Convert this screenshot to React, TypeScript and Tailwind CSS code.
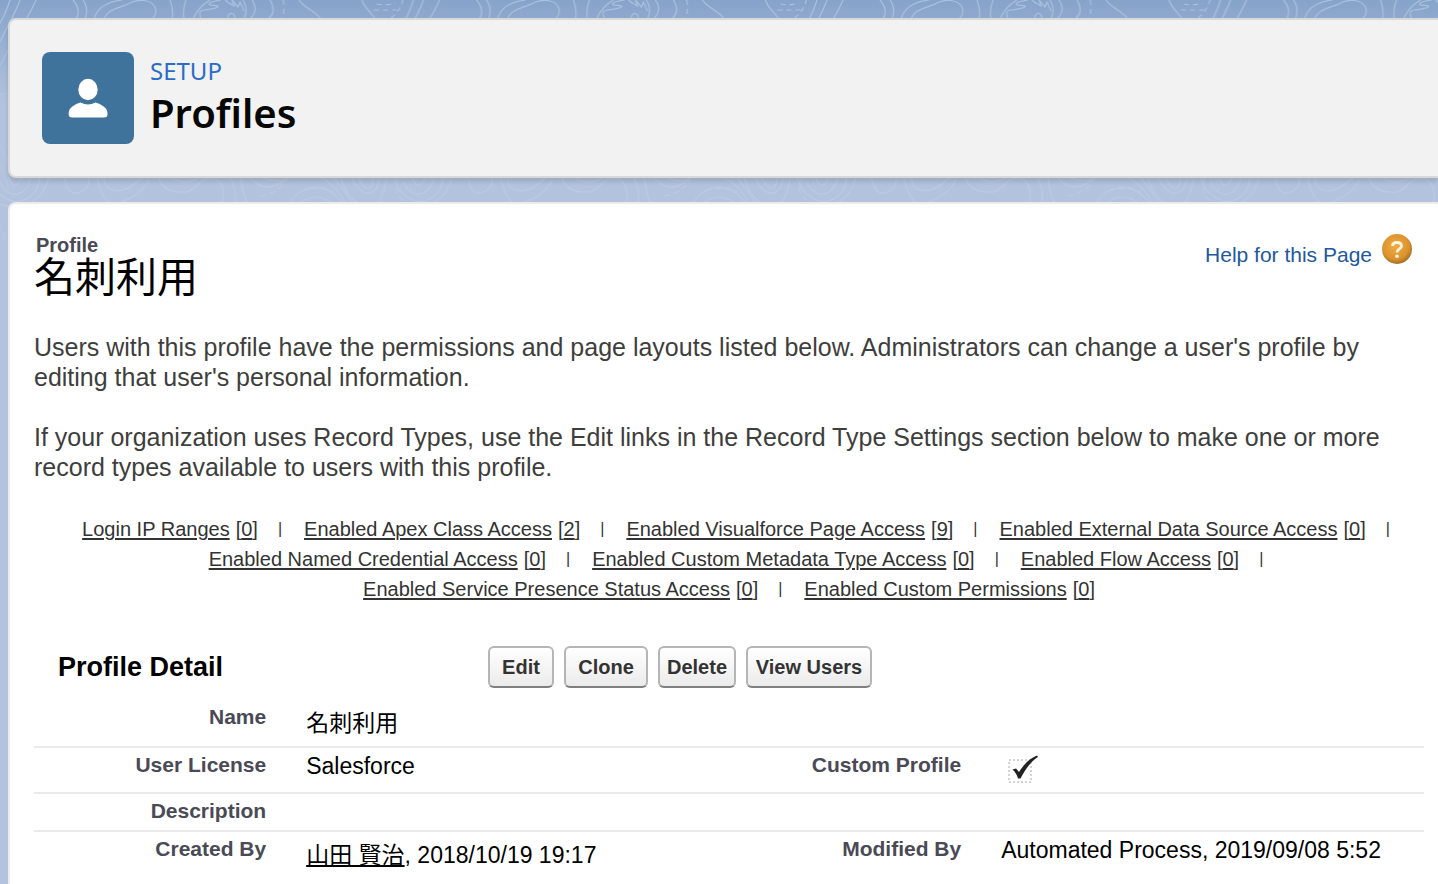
const sans = "font-['Liberation_Sans','Noto_Sans_CJK_JP',sans-serif]"

const relatedLinks = [
    { label: 'Login IP Ranges', count: 0 },
    { label: 'Enabled Apex Class Access', count: 2 },
    { label: 'Enabled Visualforce Page Access', count: 9 },
    { label: 'Enabled External Data Source Access', count: 0 },
    { label: 'Enabled Named Credential Access', count: 0 },
    { label: 'Enabled Custom Metadata Type Access', count: 0 },
    { label: 'Enabled Flow Access', count: 0 },
    { label: 'Enabled Service Presence Status Access', count: 0 },
    { label: 'Enabled Custom Permissions', count: 0 },
]

const actions = [
    { label: 'Edit', width: 'w-[66px]' },
    { label: 'Clone', width: 'w-[84px]' },
    { label: 'Delete', width: 'w-[78px]' },
    { label: 'View Users', width: 'w-[126px]' },
]

const labelClass = 'pt-1 pr-[18px] text-right align-top text-[21px] leading-[26px] font-bold text-[#4a4a56]'
const valueClass = 'pl-[22px] text-left align-top text-[23px] leading-[28px] text-black'

export default function App() {
    return (
        <div className={`relative min-h-screen overflow-hidden bg-[#b3c3de] pt-[18px] pl-2 ${sans}`}>
            <Backdrop />
            <SetupHeader />
            <main className="relative mt-6 min-h-[682px] rounded-tl-lg border-t-2 border-l-2 border-[#ebebeb] bg-white pt-7 pr-[14px] pl-6">
                <ProfileTitle />
                <div className="mt-[34px] pr-5 text-[25px] leading-[30px] text-[#3e3e3c]">
                    <p>
                        Users with this profile have the permissions and page layouts listed below. Administrators can change a user's profile by editing that user's personal information.
                    </p>
                    <p className="mt-[30px]">
                        If your organization uses Record Types, use the Edit links in the Record Type Settings section below to make one or more record types available to users with this profile.
                    </p>
                </div>
                <RelatedLinks />
                <ProfileDetail />
            </main>
        </div>
    )
}

const SetupHeader = () => (
    <header className="relative flex h-40 items-start gap-4 rounded-l-lg border-2 border-r-0 border-[#d8d8d8] bg-[#f2f2f2] p-8 shadow-[0_4px_4px_rgba(0,0,0,0.12)]">
        <div className="size-[92px] shrink-0 rounded-lg bg-[#40739b]">
            <svg viewBox="0 0 92 92" className="size-full" fill="#fff" aria-hidden="true">
                <ellipse cx="46" cy="37.5" rx="9.7" ry="10.7" />
                <path d="M38.5 50.500C32 52.500 26.700 56 26.700 61V62.500Q26.700 65.500 30 65.500H62.200Q65.500 65.500 65.500 62.500V61C65.500 56 60 52.500 53.500 50.500Q46 54.500 38.500 50.500Z" />
            </svg>
        </div>
        <div className="font-['Noto_Sans',sans-serif]">
            <p className="mt-1 text-[24px] leading-[30px] text-[#2a6cc8]">SETUP</p>
            <h1 className="text-[40px] leading-[54px] font-semibold text-[#080707]">Profiles</h1>
        </div>
    </header>
)

const ProfileTitle = () => (
    <div className="flex items-start justify-between">
        <div>
            <p className="pl-[2px] text-[20px] leading-[26px] font-bold text-[#4a4a56]">Profile</p>
            <h2 className="text-[41px] leading-[40px] text-black">名刺利用</h2>
        </div>
        <a href="#help" className="flex gap-[10px] pr-3 text-[21px] leading-[46px] text-[#2258a0]">
            Help for this Page
            <HelpIcon />
        </a>
    </div>
)

const RelatedLinks = () => (
    <ul className="mt-8 flex flex-wrap justify-center text-[20px] leading-[30px] text-[#333]">
        {relatedLinks.map(({ label, count }, i) => (
            <li key={label} className="flex items-center pl-[18px] last:pr-[18px]">
                <a href="#related" className="underline decoration-2 underline-offset-2">{label}</a>
                <span className="pl-[6px]">[<span className="underline decoration-2 underline-offset-2">{count}</span>]</span>
                {i < relatedLinks.length - 1 && <span className="pr-1 pl-5 text-[16px]">|</span>}
            </li>
        ))}
    </ul>
)

const ProfileDetail = () => (
    <section className="mt-10">
        <div className="flex h-[46px] items-start">
            <h3 className="w-[454px] pl-6 text-[27px] leading-[46px] font-bold text-black">Profile Detail</h3>
            <div className="flex gap-[10px] pt-[2px]">
                {actions.map(({ label, width }) => (
                    <button
                        key={label}
                        type="button"
                        className={`h-[42px] rounded-md border-2 border-[#b5b5b5] border-b-[#7f7f7f] bg-linear-to-b from-white to-[#ebebeb] text-[20px] font-bold whitespace-nowrap text-[#333] ${width}`}
                    >
                        {label}
                    </button>
                ))}
            </div>
        </div>
        <table className="mt-[10px] w-full table-fixed border-collapse">
            <colgroup>
                <col className="w-[18%]" />
                <col className="w-[32%]" />
                <col className="w-[18%]" />
                <col className="w-[32%]" />
            </colgroup>
            <tbody>
                <tr className="h-[47px] border-b-2 border-[#ebebeb]">
                    <th scope="row" className={labelClass}>Name</th>
                    <td colSpan={3} className={`pt-[9px] ${valueClass}`}>名刺利用</td>
                </tr>
                <tr className="h-[46px] border-b-2 border-[#ebebeb]">
                    <th scope="row" className={labelClass}>User License</th>
                    <td className={`pt-1 ${valueClass}`}>Salesforce</td>
                    <th scope="row" className={labelClass}>Custom Profile</th>
                    <td className="pt-[7px] pl-[29px] align-top"><CheckedMark /></td>
                </tr>
                <tr className="h-[38px] border-b-2 border-[#ebebeb]">
                    <th scope="row" className={labelClass}>Description</th>
                    <td colSpan={3} />
                </tr>
                <tr>
                    <th scope="row" className={labelClass}>Created By</th>
                    <td className={`pt-[9px] ${valueClass}`}>
                        <a href="#user" className="underline decoration-2 underline-offset-2">山田 賢治</a>, 2018/10/19 19:17
                    </td>
                    <th scope="row" className={labelClass}>Modified By</th>
                    <td className={`pt-1 ${valueClass}`}>Automated Process, 2019/09/08 5:52</td>
                </tr>
            </tbody>
        </table>
    </section>
)

const HelpIcon = () => (
    <svg viewBox="0 0 30 30" className="mt-[2px] size-[30px]" aria-hidden="true">
        <defs>
            <radialGradient id="help" cx="0.45" cy="0.4" r="0.62">
                <stop offset="0" stopColor="#f0ac42" />
                <stop offset="0.7" stopColor="#dc942e" />
                <stop offset="1" stopColor="#a06a25" />
            </radialGradient>
        </defs>
        <circle cx="15" cy="15" r="15" fill="url(#help)" />
        <path d="M10.500 12C10.500 9 12.500 8.500 15 8.500S19.500 9.500 19.500 12C19.500 15 15 14.800 15 18.500" fill="none" stroke="#fff3df" strokeWidth="2.800" />
        <circle cx="15" cy="22.300" r="1.800" fill="#fff3df" />
    </svg>
)

const CheckedMark = () => (
    <svg viewBox="0 0 30 30" className="size-[30px]" role="img" aria-label="Checked">
        <rect x="1" y="5" width="22" height="22" fill="none" stroke="#d4d4d4" strokeWidth="2" strokeDasharray="2 2" />
        <path d="M4.500 14.500L8 13.500L11 17C15 11 20 4 29 0.500L30 2C22 7 17 15 12.500 23.500H10C9 20 7.500 17 4.500 14.500Z" fill="#222" />
    </svg>
)

// topographic lines repeated across the sky gradient
const Backdrop = () => (
    <div className="absolute inset-x-0 top-0 h-[300px] bg-linear-to-b from-[#86a3ca] to-[#b3c3de] to-35%" aria-hidden="true">
        <svg className="size-full" fill="none" strokeWidth="1.200">
            <defs>
                <pattern id="contour" width="403.500" height="300" patternUnits="userSpaceOnUse">
                    <g stroke="#a9c1dd">
                        <path d="M10 0C7 10 3 18 -2 27M20 0C15 14 8 24 0 42M36 0C29 18 14 36 0 66M73 0C80 8 79 14 76 19M83 0C88 7 87 14 85 19M94 19C97 8 106 2 122 0M170 0C173 8 173 14 172 19M186 0C183 8 183 14 184 19" />
                        <path d="M104 19C108 8 122 8 132 2C141 -1 151 0 155 7C157 12 155 16 152 19M193 19C197 10 203 4 210 0M201 19C199 14 199 10 204 10C212 9 219 8 218 6C215 5 209 6 209 4C211 1 217 1 221 0M225 0C228 3 231 4 234 6L232 0L238 7L240 2L244 11M243 0C248 8 246 14 244 19M228 19C227 12 235 11 235 19M252 0C258 8 254 15 250 19M270 0C276 10 272 16 268 19M299 0C304 8 314 10 321 19M362 0C364 8 372 13 375 19" />
                        <path strokeDasharray="5 4" d="M283 0Q286 10 281 19M377 4Q386 6 395 3M374 10H399M391 18Q400 11 403 0" />
                    </g>
                    <g stroke="#bbcae2">
                        <path d="M0 182C8 202 28 196 31 176M8 176Q15 195 22 176M0 194C18 210 38 198 40 176M0 204C24 214 45 198 49 176M64 176Q67 195 78 193Q92 188 88 176M97 176Q100 197 111 204M104 176C104 196 126 194 139 180Q145 176 152 176M116 204C132 198 141 194 149 180M158 176Q162 194 187 192C198 188 199 177 213 178C224 182 225 194 222 204" />
                        <path d="M170 176Q184 188 202 176M229 176Q237 188 235 204M241 176Q242 194 248 204M250 176Q263 196 285 180M260 176Q277 185 292 176M289 204C301 184 326 180 343 204M299 204Q315 190 333 204M317 176Q334 182 346 204M332 176Q346 192 352 204M351 176C359 198 378 200 380 176M358 176C366 196 375 188 373 176M340 176Q348 200 360 204M387 176Q384 198 376 204M393 176Q399 193 403 193" />
                        <path strokeDasharray="6 4" d="M260 196Q277 194 287 180M302 191Q318 185 334 192M398 178Q392 193 403 200" />
                    </g>
                    <path stroke="#b4c7df" d="M0 95Q6 93 8 93M0 165Q8 178 8 194M0 145L9 164M0 225Q5 235 4 243" />
                </pattern>
            </defs>
            <rect width="100%" height="100%" fill="url(#contour)" />
        </svg>
    </div>
)
